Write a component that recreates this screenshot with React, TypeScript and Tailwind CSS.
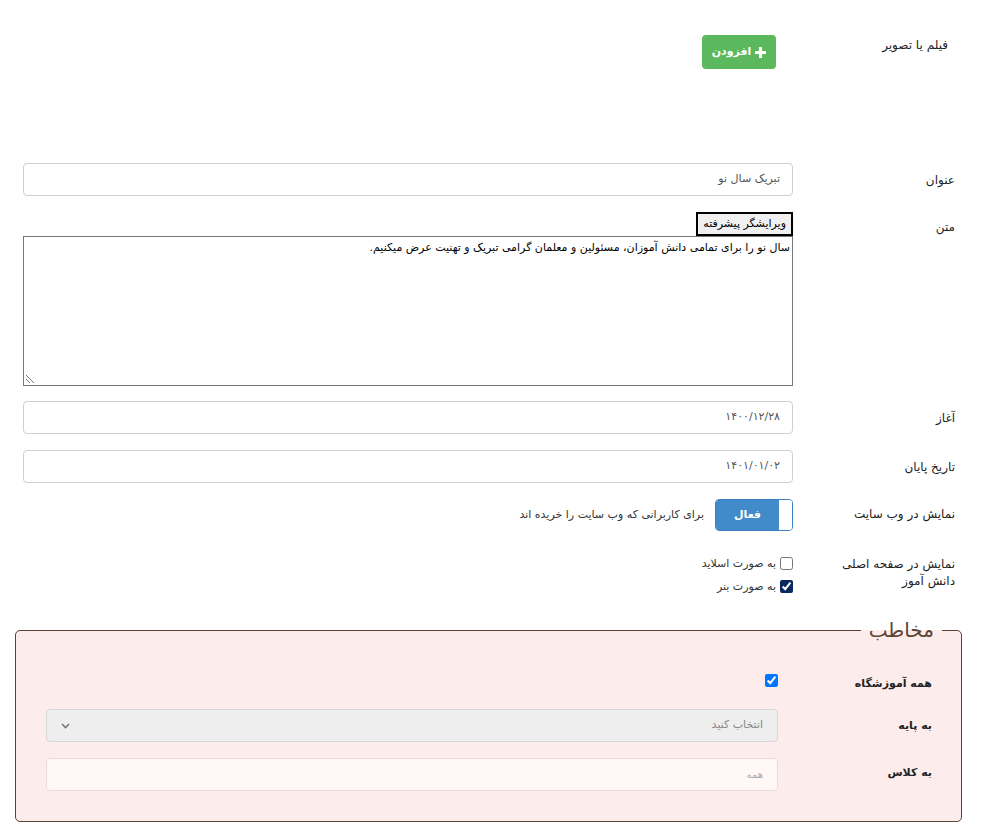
import * as React from "react";

// ── Small pieces ─────────────────────────────────────────────────────────────

function Row({
  label,
  children,
  className = "",
  labelClass = "w-[162px] text-[12px]",
}: {
  label: React.ReactNode;
  children: React.ReactNode;
  className?: string;
  labelClass?: string;
}) {
  return (
    <div className={`flex items-start ${className}`}>
      <div className={`shrink-0 text-[#222] ${labelClass}`}>{label}</div>
      <div className="flex-1 min-w-0">{children}</div>
    </div>
  );
}

function TextBox({ value }: { value: string }) {
  return (
    <div className="h-[33px] rounded-[4px] border border-[#cfcfcf] bg-white px-[12px] flex items-center text-[11px] text-[#555]">
      {value}
    </div>
  );
}

// ── Component ────────────────────────────────────────────────────────────────

export default function App() {
  return (
    <div
      dir="rtl"
      className="min-h-[840px] bg-white pr-[28px] pl-[23px] pt-[35px] text-[#333]"
      style={{ fontFamily: '"DejaVu Sans", "Noto Sans", sans-serif' }}
    >
      {/* Media */}
      <Row label={<div className="pt-[1px] pr-[7px]">فیلم یا تصویر</div>} className="h-[128px]">
        <div className="flex">
          <button
            type="button"
            className="mr-[17px] h-[34px] w-[74px] rounded-[4px] bg-[#5cb85c] text-white text-[11px] font-bold flex items-center justify-center gap-[4px]"
          >
            <svg width="11" height="11" viewBox="0 0 12 12" fill="white">
              <rect x="4.3" y="0" width="3.4" height="12" rx="0.6" />
              <rect x="0" y="4.3" width="12" height="3.4" rx="0.6" />
            </svg>
            افزودن
          </button>
        </div>
      </Row>

      {/* Title */}
      <Row label={<div className="pt-[8px]">عنوان</div>}>
        <TextBox value="تبریک سال نو" />
      </Row>

      {/* Body text */}
      <Row label={<div className="pt-[6px]">متن</div>} className="mt-[16px]">
        <div className="flex flex-col items-start">
          <div className="h-[24px] border-2 border-black bg-[#f0f0f0] px-[5px] text-[11px] text-black flex items-center">
            ویرایشگر پیشرفته
          </div>
          <div className="relative w-full h-[150px] border border-[#767676] bg-white px-[2px] pt-[3px] text-[11px] leading-[15px] text-black">
            سال نو را برای تمامی دانش آموزان، مسئولین و معلمان گرامی تبریک و تهنیت عرض میکنیم.
            <svg
              className="absolute left-[1px] bottom-[1px]"
              width="10"
              height="10"
              viewBox="0 0 10 10"
              stroke="#777"
              strokeWidth="1"
            >
              <line x1="1" y1="1" x2="9" y2="9" />
              <line x1="1" y1="5" x2="5" y2="9" />
            </svg>
          </div>
        </div>
      </Row>

      {/* Dates */}
      <Row label={<div className="pt-[8px]">آغاز</div>} className="mt-[15px]">
        <TextBox value="۱۴۰۰/۱۲/۲۸" />
      </Row>
      <Row label={<div className="pt-[8px]">تاریخ پایان</div>} className="mt-[16px]">
        <TextBox value="۱۴۰۱/۰۱/۰۲" />
      </Row>

      {/* Website toggle */}
      <Row label={<div className="pt-[6px]">نمایش در وب سایت</div>} className="mt-[16px]">
        <div className="flex items-center gap-[11px]">
          <div className="flex h-[32px] w-[78px] overflow-hidden rounded-[4px] border border-[#3d7fc0]">
            <div className="w-[13px] bg-white" />
            <div className="flex-1 bg-[#428bca] text-white text-[11px] font-bold flex items-center justify-center">
              فعال
            </div>
          </div>
          <span className="text-[11px] text-[#333]">برای کاربرانی که وب سایت را خریده اند</span>
        </div>
      </Row>

      {/* Student home */}
      <Row
        label={<div className="pt-[2px] leading-[17px]">نمایش در صفحه اصلی<br />دانش آموز</div>}
        className="mt-[23px]"
      >
        <div className="flex flex-col gap-[4px] text-[11px] leading-[19px] text-[#333]">
          <label className="flex items-center gap-[4px]">
            <input type="checkbox" readOnly className="m-0 h-[13px] w-[13px]" />
            به صورت اسلاید
          </label>
          <label className="flex items-center gap-[4px]">
            <input type="checkbox" readOnly checked className="m-0 h-[13px] w-[13px] accent-[#0a2a5e]" />
            به صورت بنر
          </label>
        </div>
      </Row>

      {/* Audience fieldset */}
      <fieldset className="mt-[22px] -mr-[7px] -ml-[8px] rounded-[5px] border border-[#5b4335] bg-[#fdecec] pr-[29px] pl-[30px] pb-[30px] pt-[14px]">
        <legend className="-mr-[10px] px-[8px] text-[20px] leading-[24px] text-[#5b4335]">مخاطب</legend>

        <Row label={<div className="pt-[6px]">همه آموزشگاه</div>} labelClass="w-[154px] text-[11px] font-bold" className="mt-[14px]">
          <input type="checkbox" readOnly checked className="m-0 h-[13px] w-[13px]" />
        </Row>

        <Row label={<div className="pt-[9px]">به پایه</div>} labelClass="w-[154px] text-[11px] font-bold" className="mt-[15px]">
          <div className="h-[33px] rounded-[4px] border border-[#d6d6d6] bg-[#eeeeee] px-[14px] flex items-center justify-between text-[11px] text-[#888]">
            <span>انتخاب کنید</span>
            <svg width="9" height="6" viewBox="0 0 9 6" fill="none" stroke="#777" strokeWidth="1.6">
              <path d="M1 1 L4.5 4.5 L8 1" />
            </svg>
          </div>
        </Row>

        <Row label={<div className="pt-[7px]">به کلاس</div>} labelClass="w-[154px] text-[11px] font-bold" className="mt-[16px]">
          <div className="h-[33px] rounded-[4px] border border-[#eadada] bg-[#fff8f7] px-[14px] flex items-center text-[10px] text-[#aaa]">
            همه
          </div>
        </Row>
      </fieldset>
    </div>
  );
}
